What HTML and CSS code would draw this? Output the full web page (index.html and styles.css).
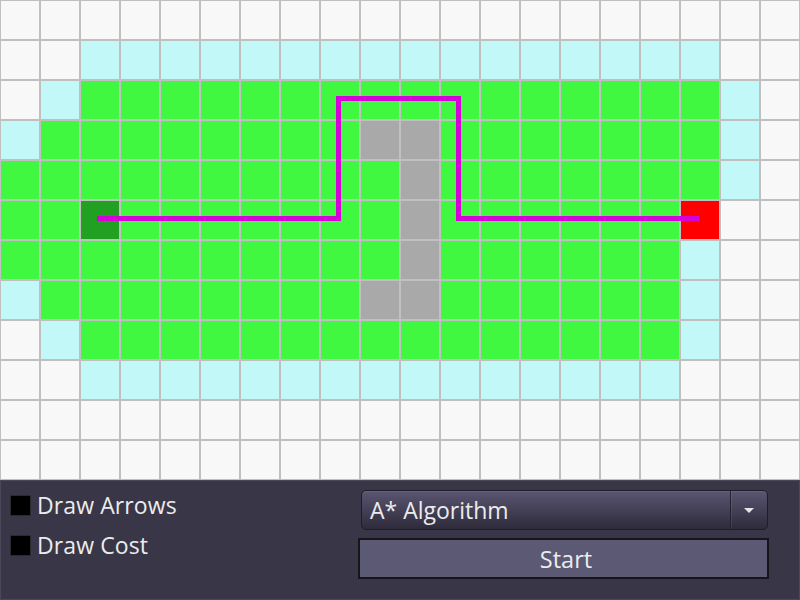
FILE: index.html
```html
<!DOCTYPE html>
<html>
<head>
<meta charset="utf-8">
<link rel="stylesheet" href="styles.css">
</head>
<body>
<div class="app">
  <div class="board">
    <div class="grid" id="grid">
      <!-- row 0 -->
      <div class="c w"></div><div class="c w"></div><div class="c w"></div><div class="c w"></div><div class="c w"></div><div class="c w"></div><div class="c w"></div><div class="c w"></div><div class="c w"></div><div class="c w"></div><div class="c w"></div><div class="c w"></div><div class="c w"></div><div class="c w"></div><div class="c w"></div><div class="c w"></div><div class="c w"></div><div class="c w"></div><div class="c w"></div><div class="c w"></div>
      <!-- row 1 -->
      <div class="c w"></div><div class="c w"></div><div class="c f"></div><div class="c f"></div><div class="c f"></div><div class="c f"></div><div class="c f"></div><div class="c f"></div><div class="c f"></div><div class="c f"></div><div class="c f"></div><div class="c f"></div><div class="c f"></div><div class="c f"></div><div class="c f"></div><div class="c f"></div><div class="c f"></div><div class="c f"></div><div class="c w"></div><div class="c w"></div>
      <!-- row 2 -->
      <div class="c w"></div><div class="c f"></div><div class="c v"></div><div class="c v"></div><div class="c v"></div><div class="c v"></div><div class="c v"></div><div class="c v"></div><div class="c v"></div><div class="c v"></div><div class="c v"></div><div class="c v"></div><div class="c v"></div><div class="c v"></div><div class="c v"></div><div class="c v"></div><div class="c v"></div><div class="c v"></div><div class="c f"></div><div class="c w"></div>
      <!-- row 3 -->
      <div class="c f"></div><div class="c v"></div><div class="c v"></div><div class="c v"></div><div class="c v"></div><div class="c v"></div><div class="c v"></div><div class="c v"></div><div class="c v"></div><div class="c x"></div><div class="c x"></div><div class="c v"></div><div class="c v"></div><div class="c v"></div><div class="c v"></div><div class="c v"></div><div class="c v"></div><div class="c v"></div><div class="c f"></div><div class="c w"></div>
      <!-- row 4 -->
      <div class="c v"></div><div class="c v"></div><div class="c v"></div><div class="c v"></div><div class="c v"></div><div class="c v"></div><div class="c v"></div><div class="c v"></div><div class="c v"></div><div class="c v"></div><div class="c x"></div><div class="c v"></div><div class="c v"></div><div class="c v"></div><div class="c v"></div><div class="c v"></div><div class="c v"></div><div class="c v"></div><div class="c f"></div><div class="c w"></div>
      <!-- row 5 -->
      <div class="c v"></div><div class="c v"></div><div class="c s"></div><div class="c v"></div><div class="c v"></div><div class="c v"></div><div class="c v"></div><div class="c v"></div><div class="c v"></div><div class="c v"></div><div class="c x"></div><div class="c v"></div><div class="c v"></div><div class="c v"></div><div class="c v"></div><div class="c v"></div><div class="c v"></div><div class="c g"></div><div class="c w"></div><div class="c w"></div>
      <!-- row 6 -->
      <div class="c v"></div><div class="c v"></div><div class="c v"></div><div class="c v"></div><div class="c v"></div><div class="c v"></div><div class="c v"></div><div class="c v"></div><div class="c v"></div><div class="c v"></div><div class="c x"></div><div class="c v"></div><div class="c v"></div><div class="c v"></div><div class="c v"></div><div class="c v"></div><div class="c v"></div><div class="c f"></div><div class="c w"></div><div class="c w"></div>
      <!-- row 7 -->
      <div class="c f"></div><div class="c v"></div><div class="c v"></div><div class="c v"></div><div class="c v"></div><div class="c v"></div><div class="c v"></div><div class="c v"></div><div class="c v"></div><div class="c x"></div><div class="c x"></div><div class="c v"></div><div class="c v"></div><div class="c v"></div><div class="c v"></div><div class="c v"></div><div class="c v"></div><div class="c f"></div><div class="c w"></div><div class="c w"></div>
      <!-- row 8 -->
      <div class="c w"></div><div class="c f"></div><div class="c v"></div><div class="c v"></div><div class="c v"></div><div class="c v"></div><div class="c v"></div><div class="c v"></div><div class="c v"></div><div class="c v"></div><div class="c v"></div><div class="c v"></div><div class="c v"></div><div class="c v"></div><div class="c v"></div><div class="c v"></div><div class="c v"></div><div class="c f"></div><div class="c w"></div><div class="c w"></div>
      <!-- row 9 -->
      <div class="c w"></div><div class="c w"></div><div class="c f"></div><div class="c f"></div><div class="c f"></div><div class="c f"></div><div class="c f"></div><div class="c f"></div><div class="c f"></div><div class="c f"></div><div class="c f"></div><div class="c f"></div><div class="c f"></div><div class="c f"></div><div class="c f"></div><div class="c f"></div><div class="c f"></div><div class="c w"></div><div class="c w"></div><div class="c w"></div>
      <!-- row 10 -->
      <div class="c w"></div><div class="c w"></div><div class="c w"></div><div class="c w"></div><div class="c w"></div><div class="c w"></div><div class="c w"></div><div class="c w"></div><div class="c w"></div><div class="c w"></div><div class="c w"></div><div class="c w"></div><div class="c w"></div><div class="c w"></div><div class="c w"></div><div class="c w"></div><div class="c w"></div><div class="c w"></div><div class="c w"></div><div class="c w"></div>
      <!-- row 11 -->
      <div class="c w"></div><div class="c w"></div><div class="c w"></div><div class="c w"></div><div class="c w"></div><div class="c w"></div><div class="c w"></div><div class="c w"></div><div class="c w"></div><div class="c w"></div><div class="c w"></div><div class="c w"></div><div class="c w"></div><div class="c w"></div><div class="c w"></div><div class="c w"></div><div class="c w"></div><div class="c w"></div><div class="c w"></div><div class="c w"></div>
    </div>
    <svg class="path" width="800" height="480" viewBox="0 0 800 480">
      <polyline points="97,218.5 338.5,218.5 338.5,98.5 458.5,98.5 458.5,218.5 699,218.5" fill="none" stroke="#d600d8" stroke-width="5" stroke-linejoin="miter"/>
    </svg>
  </div>
  <div class="panel">
    <div class="checks">
      <label class="check"><span class="box"></span><span class="lbl">Draw Arrows</span></label>
      <label class="check"><span class="box"></span><span class="lbl">Draw Cost</span></label>
    </div>
    <div class="controls">
      <div class="combo">
        <span class="combo-text">A* Algorithm</span>
        <span class="combo-btn"><span class="tri"></span></span>
      </div>
      <div class="start">Start</div>
    </div>
  </div>
</div>
</body>
</html>
```

FILE: styles.css
```css
* { box-sizing: border-box; }
html, body { margin: 0; padding: 0; }
body {
  width: 800px;
  height: 600px;
  overflow: hidden;
  font-family: "Open Sans", "Noto Sans", sans-serif;
  background: #393747;
}
.app { display: flex; flex-direction: column; width: 800px; height: 600px; }
.board { position: relative; width: 800px; height: 480px; }
.grid {
  display: grid;
  grid-template-columns: repeat(20, 40px);
  grid-template-rows: repeat(12, 40px);
}
.c { border: 1px solid #c0c0c0; }
.w { background: #f8f8f8; }
.f { background: #c2f8f7; }
.v { background: #40f840; }
.x { background: #a9a9a9; }
.s { background: #21a021; }
.g { background: #fe0000; }
.path { position: absolute; left: 0; top: 0; }

.panel {
  height: 120px;
  border: 1px solid #4a4858;
  background: #393747;
  display: flex;
}
.checks {
  display: flex;
  flex-direction: column;
  gap: 18px;
  padding: 13px 0 0 9px;
  width: 357px;
}
.check { display: flex; align-items: center; gap: 6px; height: 22px; }
.box {
  width: 21px;
  height: 21px;
  background: #000;
  border: 1px solid #2a2a30;
  border-radius: 1px;
}
.lbl { color: #ececec; font-size: 23px; line-height: 22px; letter-spacing: 0.1px; }
.controls {
  width: 411px;
  padding-top: 9px;
  display: flex;
  flex-direction: column;
  gap: 8px;
}
.combo {
  margin: 0 1px 0 3px;
  height: 40px;
  border: 1px solid #1f1d28;
  border-radius: 5px;
  background: linear-gradient(#5a5571, #2e2b3b);
  display: flex;
  box-shadow: inset 0 1px 0 rgba(255,255,255,0.08);
}
.combo-text {
  flex: 1;
  color: #ececec;
  font-size: 23px;
  line-height: 38px;
  padding-left: 8px;
}
.combo-btn {
  width: 37px;
  border-left: 1px solid #24222e;
  box-shadow: inset 1px 0 0 rgba(255,255,255,0.08);
  display: flex;
  align-items: center;
  justify-content: center;
}
.tri {
  width: 0; height: 0;
  border-left: 5px solid transparent;
  border-right: 5px solid transparent;
  border-top: 5px solid #e6e6e6;
}
.start {
  height: 41px;
  border: 2px solid #15151b;
  background: #5b5974;
  color: #ececec;
  font-size: 23.5px;
  line-height: 39px;
  padding-left: 5px;
  text-align: center;
}
```
